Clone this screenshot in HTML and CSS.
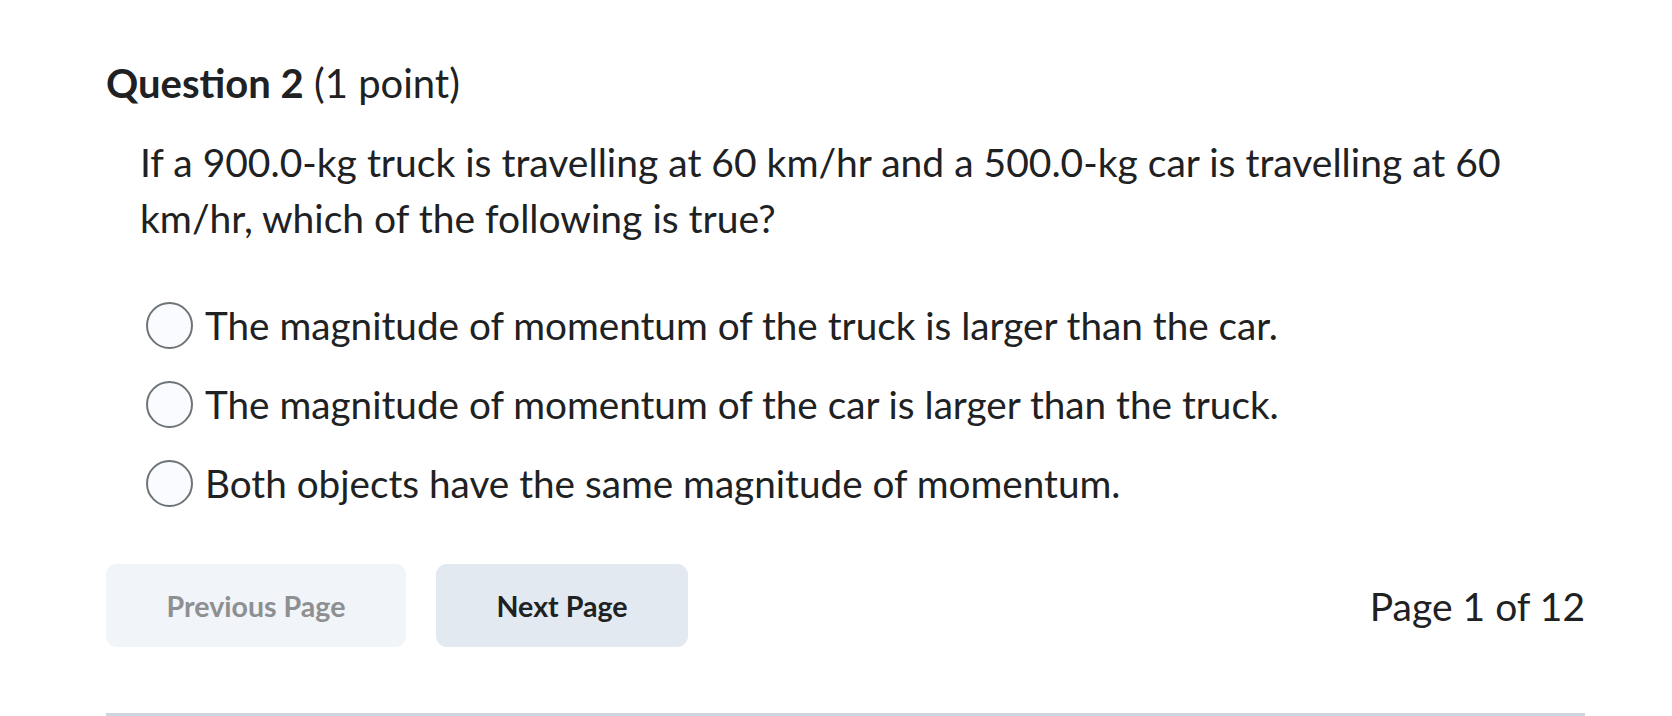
FILE: index.html
```html
<!DOCTYPE html>
<html lang="en">
<head>
  <meta charset="UTF-8">
  <title>Quiz - Question 2</title>
  <link rel="stylesheet" href="styles.css">
</head>
<body>
  <div class="quiz">
    <h2 class="q-title"><strong>Question 2</strong> (1 point)</h2>
    <p class="q-text">If a 900.0-kg truck is travelling at 60 km/hr and a 500.0-kg car is travelling at 60 km/hr, which of the following is true?</p>

    <div class="choices">
      <label class="choice">
        <input type="radio" name="q2">
        <span>The magnitude of momentum of the truck is larger than the car.</span>
      </label>
      <label class="choice">
        <input type="radio" name="q2">
        <span>The magnitude of momentum of the car is larger than the truck.</span>
      </label>
      <label class="choice">
        <input type="radio" name="q2">
        <span>Both objects have the same magnitude of momentum.</span>
      </label>
    </div>

    <div class="pager">
      <button class="btn btn-prev" disabled>Previous Page</button>
      <button class="btn btn-next">Next Page</button>
      <span class="page-count">Page 1 of 12</span>
    </div>
    <hr class="divider">
  </div>
</body>
</html>
```

FILE: styles.css
```css
body {
  margin: 0;
  font-family: Lato, "Open Sans", sans-serif;
  color: #202122;
  background: #fff;
}
.quiz {
  width: 1479px;
  margin-left: 106px;
  padding-top: 55px;
}
.q-title {
  margin: 0;
  font-size: 40px;
  font-weight: 400;
  line-height: 56px;
}
.q-title strong {
  font-weight: 700;
}
.q-text {
  margin: 23px 0 0 34px;
  font-size: 39px;
  line-height: 56px;
}
.choices {
  margin: 50px 0 0 40px;
  display: flex;
  flex-direction: column;
  gap: 21px;
}
.choice {
  display: flex;
  align-items: center;
  gap: 12px;
  height: 58px;
  font-size: 38.7px;
  line-height: 56px;
}
.choice input {
  appearance: none;
  margin: 0;
  width: 47px;
  height: 47px;
  border: 2px solid #6e7376;
  border-radius: 50%;
  background: #f9fbff;
}
.pager {
  display: flex;
  align-items: center;
  gap: 30px;
  margin-top: 52px;
}
.btn {
  height: 83px;
  border: none;
  border-radius: 11px;
  font-family: Lato, "Open Sans", sans-serif;
  font-size: 28.6px;
  font-weight: 700;
  padding: 0;
}
.btn-prev {
  width: 300px;
  background: #f1f4f8;
  color: #8d8f91;
}
.btn-next {
  width: 252px;
  background: #e3e9f1;
  color: #202122;
}
.page-count {
  margin-left: auto;
  font-size: 39px;
}
.divider {
  margin: 66px 0 0;
  border: none;
  border-top: 3px solid #cdd5de;
}
```
